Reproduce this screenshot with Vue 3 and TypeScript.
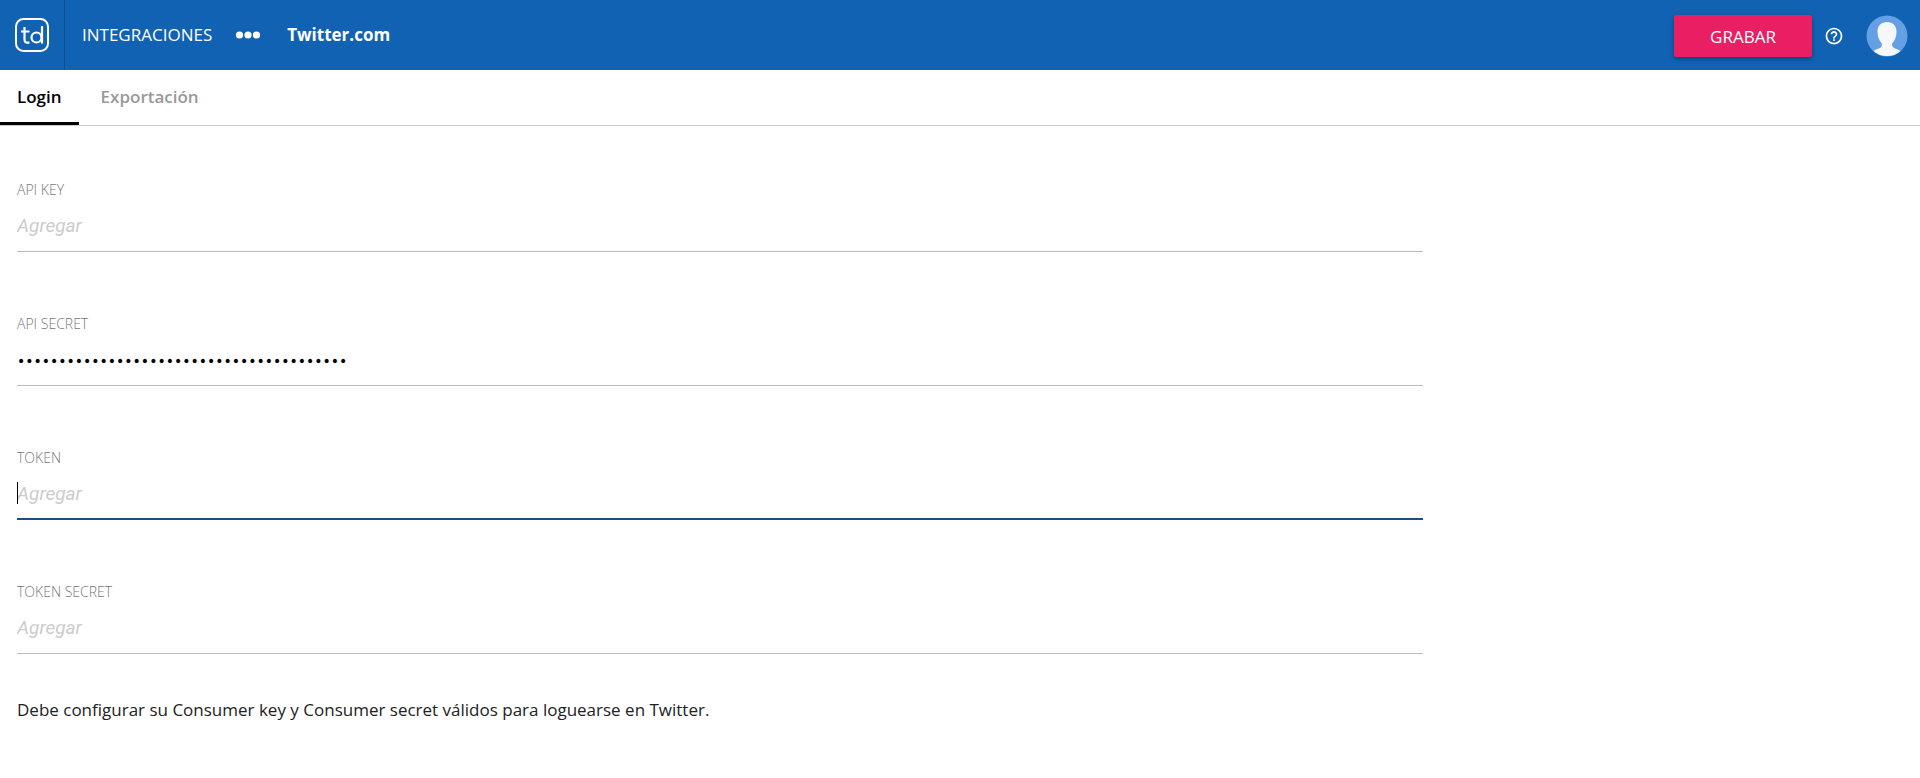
<script setup lang="ts">
import { ref } from 'vue'

interface Field {
  id: string
  label: string
  type: 'text' | 'password'
  value: string
}

const tabs = ['Login', 'Exportación']
const activeTab = ref('Login')
const activeField = ref('token')

const fields = ref<Field[]>([
  { id: 'api-key', label: 'API KEY', type: 'text', value: '' },
  { id: 'api-secret', label: 'API SECRET', type: 'password', value: 'x'.repeat(40) },
  { id: 'token', label: 'TOKEN', type: 'text', value: '' },
  { id: 'token-secret', label: 'TOKEN SECRET', type: 'text', value: '' },
])
</script>

<template>
  <div class="page">
    <header class="topbar">
      <a class="brand" href="#" aria-label="Inicio">
        <svg width="36" height="36" viewBox="0 0 36 36" fill="none" stroke="#fff">
          <rect x="2" y="2" width="32" height="32" rx="7.500" stroke-width="2" />
          <path d="M10.500 10v12.500q0 4 5 3M7 14.500h8.500" stroke-width="2.200" />
          <circle cx="22.500" cy="20.500" r="5" stroke-width="2.200" />
          <path d="M28 9v17.500" stroke-width="2.200" />
        </svg>
      </a>
      <nav class="crumbs">
        <a class="section" href="#">INTEGRACIONES</a>
        <button class="dots" type="button" aria-label="Más">
          <svg width="26" height="8" viewBox="0 0 26 8" fill="#fff">
            <circle cx="4.500" cy="4" r="3.600" />
            <circle cx="13" cy="4" r="3.600" />
            <circle cx="21.500" cy="4" r="3.600" />
          </svg>
        </button>
        <strong class="current">Twitter.com</strong>
      </nav>
      <div class="actions">
        <button class="save" type="button">GRABAR</button>
        <button class="help" type="button" aria-label="Ayuda">
          <svg width="20" height="20" viewBox="0 0 24 24" fill="#fff">
            <path d="M11 18h2v-2h-2v2zm1-16C6.480 2 2 6.480 2 12s4.480 10 10 10 10-4.480 10-10S17.520 2 12 2zm0 18c-4.410 0-8-3.590-8-8s3.590-8 8-8 8 3.590 8 8-3.590 8-8 8zm0-14c-2.210 0-4 1.790-4 4h2c0-1.100.9-2 2-2s2 .9 2 2c0 2-3 1.750-3 5h2c0-2.250 3-2.500 3-5 0-2.210-1.790-4-4-4z" />
          </svg>
        </button>
        <button class="avatar" type="button" aria-label="Perfil">
          <svg width="42" height="42" viewBox="0 0 42 42">
            <circle cx="21" cy="21" r="20.500" fill="#64a0e3" />
            <path
              d="M21 7c-6 0-9.700 4-9.500 10 .2 5 1.500 8.500 4.500 11.800 0 3.200-1.500 4.200-4.500 5.200-1.800.6-3 1.300-3.800 2.200A20.500 20.500 0 0 0 34.300 36.200c-.8-.9-2-1.600-3.800-2.200-3-1-4.500-2-4.500-5.200 3-3.300 4.300-6.800 4.500-11.800.2-6-3.500-10-9.500-10z"
              fill="#f6f7f8"
            />
          </svg>
        </button>
      </div>
    </header>

    <nav class="tabs" role="tablist">
      <button
        v-for="tab in tabs"
        :key="tab"
        class="tab"
        :class="{ active: tab === activeTab }"
        type="button"
        role="tab"
        :aria-selected="tab === activeTab"
        @click="activeTab = tab"
      >
        {{ tab }}
      </button>
    </nav>

    <main class="content">
      <form class="form" @submit.prevent>
        <div v-for="f in fields" :key="f.id" class="field" :class="{ focused: f.id === activeField }">
          <label :for="f.id">{{ f.label }}</label>
          <div class="control">
            <input
              :id="f.id"
              v-model="f.value"
              :type="f.type"
              placeholder="Agregar"
              autocomplete="off"
              @focus="activeField = f.id"
            />
            <span v-if="f.id === activeField && !f.value" class="caret"></span>
          </div>
        </div>
      </form>
      <p class="note">Debe configurar su Consumer key y Consumer secret válidos para loguearse en Twitter.</p>
    </main>
  </div>
</template>

<style>
body {
  background: #fff;
}
</style>

<style scoped>
.page {
  font-family: 'Open Sans', 'Noto Sans', sans-serif;
  color: #222;
}

button {
  font-family: inherit;
  border: 0;
  padding: 0;
  background: none;
  cursor: pointer;
}

svg {
  display: block;
}

.topbar {
  display: flex;
  align-items: center;
  height: 70px;
  padding-right: 12px;
  background: #1162b3;
  color: #fff;
}

.brand {
  display: flex;
  align-items: center;
  justify-content: center;
  align-self: stretch;
  width: 64px;
  border-right: 1px solid #0b4f96;
}

.crumbs {
  display: flex;
  flex: 1;
  align-items: center;
  padding-left: 17px;
  font-size: 17px;
}

.section,
.current {
  padding-bottom: 2px;
}

.section {
  color: #fff;
  text-decoration: none;
}

.dots {
  margin: 0 26px 0 23px;
}

.current {
  font-weight: 700;
}

.actions {
  display: flex;
  align-items: center;
  padding-top: 2px;
}

.save {
  width: 138px;
  height: 42px;
  border-radius: 2px;
  background: #e91e63;
  box-shadow: 0 2px 4px rgba(0, 0, 0, 0.35);
  color: #fff;
  font-size: 17px;
}

.help {
  margin: 0 22px 0 12px;
}

.tabs {
  display: flex;
  height: 55px;
  border-bottom: 1px solid #ccc;
}

.tab {
  height: 55px;
  padding: 0 22px;
  border-bottom: 3px solid transparent;
  color: #999;
  font-size: 17px;
  font-weight: 600;
}

.tab.active {
  padding: 0 17px;
  border-bottom-color: #000;
  color: #000;
}

.content {
  padding: 54px 17px;
}

.form {
  display: grid;
  gap: 62px;
  width: 75%;
  max-width: 1406px;
}

.field {
  display: flex;
  flex-direction: column;
  height: 72px;
}

label {
  color: #777;
  font-size: 14px;
  font-weight: 300;
  line-height: 20px;
}

.control {
  position: relative;
  height: 51px;
  border-bottom: 1px solid #bbb;
}

input {
  box-sizing: border-box;
  width: 100%;
  height: 50px;
  padding: 0;
  border: 0;
  outline: none;
  background: transparent;
  color: #000;
  font-family: Roboto, sans-serif;
  font-size: 19px;
}

input[type='password'] {
  padding-top: 4px;
  font-family: 'DejaVu Sans', sans-serif;
  font-size: 14px;
}

input::placeholder {
  color: #ccc;
  font-style: italic;
  opacity: 1;
}

.focused .control {
  border-bottom: 2px solid #1f4e7d;
}

.caret {
  position: absolute;
  top: 14px;
  left: 0;
  width: 1px;
  height: 22px;
  background: #000;
}

.note {
  margin: 43px 0 0;
  font-size: 17px;
  line-height: 26px;
}
</style>
